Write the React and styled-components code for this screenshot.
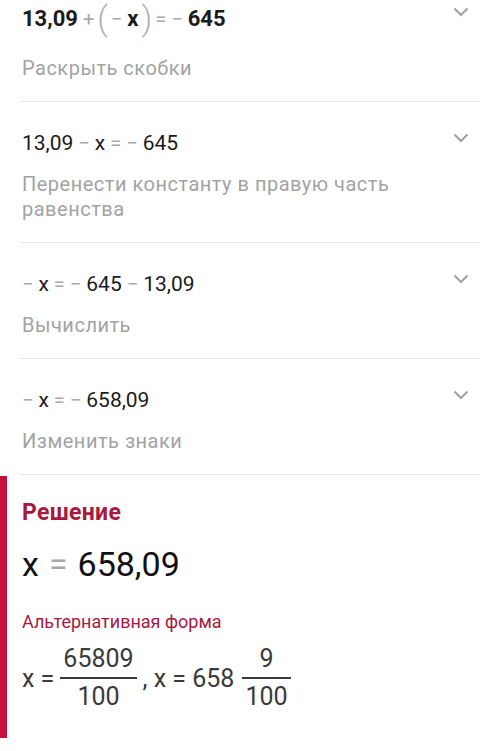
import React from "react";
import styled, { createGlobalStyle } from "styled-components";

const Global = createGlobalStyle`
  html, body { margin: 0; padding: 0; background: #fff; }
  body { font-family: Roboto, "Noto Sans", "Liberation Sans", sans-serif; color: #1b1b1b; }
  * { box-sizing: border-box; }
`;

const Page = styled.div`
  width: 500px;
  height: 751px;
  overflow: hidden;
  background: #fff;
  display: flex;
  flex-direction: column;
`;

const StepList = styled.div`
  display: flex;
  flex-direction: column;
  padding: 0 20px;
`;

const Step = styled.div`
  display: flex;
  flex-direction: column;
  padding: ${(p) => (p.$first ? "0" : "28px")} 0 20px 2px;
  border-bottom: 1px solid #e6e6e6;
`;

const StepHead = styled.div`
  display: flex;
  align-items: flex-start;
  justify-content: space-between;
`;

const Equation = styled.div`
  display: flex;
  align-items: center;
  gap: 5px;
  height: ${(p) => (p.$tall ? "37px" : "26px")};
  font-size: ${(p) => (p.$bold ? "22px" : "21px")};
  font-weight: ${(p) => (p.$bold ? 700 : 400)};
  color: #1b1b1b;
  white-space: nowrap;
`;

const Op = styled.span`
  color: #a9a9a9;
  font-weight: 400;
  font-size: 20px;
`;

const Paren = styled.span`
  color: #b0b0b0;
  font-weight: 300;
  font-size: 33px;
  line-height: 37px;
  margin: 0 -2px;
`;

const Chevron = styled.svg`
  width: 16px;
  height: 10px;
  margin: ${(p) => (p.$tall ? "7px" : "3px")} 11px 0 0;
  flex: none;
`;

const Desc = styled.div`
  margin-top: ${(p) => (p.$first ? "19px" : "16px")};
  font-size: 20px;
  letter-spacing: 0.5px;
  line-height: 25px;
  color: #a3a3a3;
  max-width: 420px;
`;

const Solution = styled.section`
  margin-top: 1px;
  border-left: 7px solid #c4143d;
  padding: 23px 0 26px 15px;
  display: flex;
  flex-direction: column;
`;

const SolutionTitle = styled.div`
  font-size: 23px;
  line-height: 28px;
  font-weight: 700;
  letter-spacing: 0.3px;
  color: #a8193f;
`;

const Result = styled.div`
  margin-top: 17px;
  display: flex;
  align-items: center;
  gap: 10px;
  font-size: 34px;
  line-height: 40px;
  color: #111;
`;

const ResultOp = styled.span`
  color: #aaaaaa;
`;

const AltTitle = styled.div`
  margin-top: 27px;
  font-size: 18px;
  line-height: 22px;
  color: #a8193f;
`;

const AltRow = styled.div`
  margin-top: 11px;
  display: flex;
  align-items: center;
  font-size: 25px;
  color: #3a3a3a;
`;

const Text = styled.span`
  margin-right: ${(p) => p.$mr || 0}px;
`;

const Frac = styled.span`
  display: inline-flex;
  flex-direction: column;
  align-items: stretch;
  text-align: center;
  margin: 0 6px 0 ${(p) => p.$ml || 4}px;
`;

const FracPart = styled.span`
  line-height: 30px;
  padding: 0 3px;
`;

const FracRule = styled.span`
  height: 2px;
  background: #3a3a3a;
  margin: 3px 0;
`;

const ChevronIcon = ({ tall }) => (
  <Chevron $tall={tall} viewBox="0 0 16 10">
    <path d="M1.5 1.5 L8 8 L14.5 1.5" fill="none" stroke="#a0a0a0" strokeWidth="2" />
  </Chevron>
);

export default function App() {
  return (
    <Page>
      <Global />
      <StepList>
        <Step $first>
          <StepHead>
            <Equation $bold $tall>
              <span>13,09</span>
              <Op>+</Op>
              <Paren>(</Paren>
              <Op>−</Op>
              <span>x</span>
              <Paren>)</Paren>
              <Op>=</Op>
              <Op>−</Op>
              <span>645</span>
            </Equation>
            <ChevronIcon tall />
          </StepHead>
          <Desc $first>Раскрыть скобки</Desc>
        </Step>
        <Step>
          <StepHead>
            <Equation>
              <span>13,09</span>
              <Op>−</Op>
              <span>x</span>
              <Op>=</Op>
              <Op>−</Op>
              <span>645</span>
            </Equation>
            <ChevronIcon />
          </StepHead>
          <Desc>Перенести константу в правую часть равенства</Desc>
        </Step>
        <Step>
          <StepHead>
            <Equation>
              <Op>−</Op>
              <span>x</span>
              <Op>=</Op>
              <Op>−</Op>
              <span>645</span>
              <Op>−</Op>
              <span>13,09</span>
            </Equation>
            <ChevronIcon />
          </StepHead>
          <Desc>Вычислить</Desc>
        </Step>
        <Step>
          <StepHead>
            <Equation>
              <Op>−</Op>
              <span>x</span>
              <Op>=</Op>
              <Op>−</Op>
              <span>658,09</span>
            </Equation>
            <ChevronIcon />
          </StepHead>
          <Desc>Изменить знаки</Desc>
        </Step>
      </StepList>
      <Solution>
        <SolutionTitle>Решение</SolutionTitle>
        <Result>
          <span>x</span>
          <ResultOp>=</ResultOp>
          <span>658,09</span>
        </Result>
        <AltTitle>Альтернативная форма</AltTitle>
        <AltRow>
          <Text>x =</Text>
          <Frac $ml={6}>
            <FracPart>65809</FracPart>
            <FracRule />
            <FracPart>100</FracPart>
          </Frac>
          <Text $mr={4}>, x = 658</Text>
          <Frac $ml={0}>
            <FracPart>9</FracPart>
            <FracRule />
            <FracPart>100</FracPart>
          </Frac>
        </AltRow>
      </Solution>
    </Page>
  );
}
